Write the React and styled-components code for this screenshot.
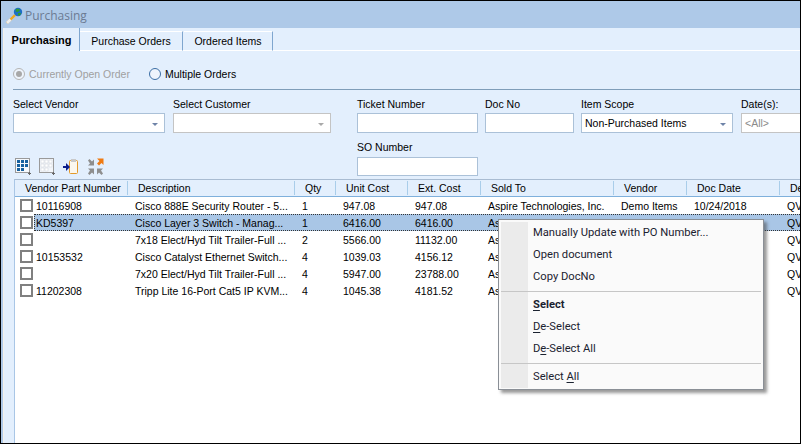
import styled, { createGlobalStyle } from "styled-components";

const COLS = [167, 41, 72, 73, 133, 73, 93, 40];

const headers = [
  "Description",
  "Qty",
  "Unit Cost",
  "Ext. Cost",
  "Sold To",
  "Vendor",
  "Doc Date",
  "Dept",
];

const rows = [
  ["10116908", "Cisco 888E Security Router - 5...", "1", "947.08", "947.08", "Aspire Technologies, Inc.", "Demo Items", "10/24/2018", "QVC"],
  ["KD5397", "Cisco Layer 3 Switch - Manag...", "1", "6416.00", "6416.00", "Aspire Technologies, Inc.", "", "", "QVC"],
  ["", "7x18 Elect/Hyd Tilt Trailer-Full ...", "2", "5566.00", "11132.00", "Aspire Technologies, Inc.", "", "", "QVC"],
  ["10153532", "Cisco Catalyst Ethernet Switch...", "4", "1039.03", "4156.12", "Aspire Technologies, Inc.", "", "", "QVC"],
  ["", "7x20 Elect/Hyd Tilt Trailer-Full ...", "4", "5947.00", "23788.00", "Aspire Technologies, Inc.", "", "", "QVC"],
  ["11202308", "Tripp Lite 16-Port Cat5 IP KVM...", "4", "1045.38", "4181.52", "Aspire Technologies, Inc.", "", "", "QVC"],
];

const Global = createGlobalStyle`
  html, body { margin: 0; padding: 0; background: #fff; }
  body { font-family: "Liberation Sans", Arial, sans-serif; font-size: 10.5px; color: #000; }
`;

const Window = styled.div`
  width: 801px;
  height: 444px;
  box-sizing: border-box;
  border: 1px solid #000;
  background: #aec9e8;
  display: flex;
  flex-direction: column;
  overflow: hidden;
  position: relative;
`;

const TitleBar = styled.div`
  height: 27px;
  flex: none;
  display: flex;
  align-items: center;
  gap: 1px;
  padding: 2px 0 0 5px;
  box-sizing: border-box;
  font-family: "Open Sans", sans-serif;
  font-size: 12px;
  color: #6c7b93;
`;

const Body = styled.div`
  flex: 1;
  min-height: 0;
  margin-left: 2px;
  border-left: 1px solid #f4f1ea;
  background: #e3effd;
  display: flex;
  flex-direction: column;
`;

const TabStrip = styled.div`
  height: 23px;
  flex: none;
  display: flex;
  align-items: flex-end;
  background: #e3effd;
  box-shadow: inset 0 -1px 0 #fff;
`;

const TabItem = styled.div`
  box-sizing: border-box;
  height: ${(p) => (p.$active ? 23 : 20)}px;
  width: ${(p) => p.$w}px;
  margin-right: ${(p) => p.$gap}px;
  display: flex;
  align-items: center;
  justify-content: center;
  background: #e3effd;
  border-top: ${(p) => (p.$active ? "none" : "1px solid #fff")};
  border-right: 1px solid #7fa6cf;
  border-bottom: ${(p) => (p.$active ? "none" : "1px solid #fff")};
  font-weight: ${(p) => (p.$active ? 700 : 400)};
  font-size: ${(p) => (p.$active ? 11 : 10.5)}px;
  color: #000;
`;

const RadioRow = styled.div`
  height: 39px;
  flex: none;
  box-sizing: border-box;
  margin-left: 9px;
  padding-top: 8px;
  display: flex;
  align-items: center;
  border-bottom: 1px solid #7f9db9;
`;

const RadioOption = styled.label`
  display: flex;
  align-items: center;
  gap: 4px;
  width: 136px;
  color: ${(p) => (p.$disabled ? "#a0a0a0" : "#000")};
`;

const RadioMark = styled.span`
  width: 12px;
  height: 12px;
  box-sizing: border-box;
  border-radius: 50%;
  border: 1px solid ${(p) => (p.$disabled ? "#b4b4b4" : "#3b6ea5")};
  background: #eef4fc;
  display: flex;
  align-items: center;
  justify-content: center;

  &::after {
    content: "";
    display: ${(p) => (p.$checked ? "block" : "none")};
    width: 6px;
    height: 6px;
    border-radius: 50%;
    background: #a8a8a8;
  }
`;

const Filters = styled.div`
  flex: none;
  padding: 8px 0 0 9px;
  display: flex;
`;

const Field = styled.div`
  width: ${(p) => p.$w}px;
  margin-right: ${(p) => p.$gap || 0}px;
  flex: none;
  display: flex;
  flex-direction: column;
`;

const FieldLabel = styled.div`
  height: 15px;
  line-height: 13px;
  white-space: nowrap;
`;

const Input = styled.div`
  height: 20px;
  box-sizing: border-box;
  background: #fff;
  border: 1px solid ${(p) => (p.$disabled ? "#c4c4c4" : "#abc1d8")};
  display: flex;
  align-items: center;
  justify-content: space-between;
  padding: 0 6px 0 3px;
  color: ${(p) => (p.$muted ? "#8a8a8a" : "#000")};
  white-space: nowrap;
  overflow: hidden;
`;

const Caret = styled.span`
  width: 0;
  height: 0;
  border-left: 3px solid transparent;
  border-right: 3px solid transparent;
  border-top: 3px solid ${(p) => (p.$disabled ? "#a9a9a9" : "#6e83a8")};
  margin-top: 2px;
`;

const SecondRow = styled.div`
  flex: none;
  height: 46px;
  box-sizing: border-box;
  padding: 8px 0 0 9px;
  display: flex;
  justify-content: space-between;
`;

const Toolbar = styled.div`
  display: flex;
  align-items: flex-start;
  gap: 7px;
  padding: 17px 0 0 2px;

  svg {
    display: block;
  }
`;

const SoField = styled(Field)`
  margin-right: 322px;

  ${FieldLabel} {
    height: 16px;
  }

  ${Input} {
    height: 19px;
  }
`;

const Grid = styled.div`
  flex: 1;
  min-height: 0;
  margin-left: 10px;
  background: #fff;
  border-left: 1px solid #a9c6e6;
  border-top: 1px solid #a9bcd2;
  overflow: hidden;
`;

const HeaderRow = styled.div`
  display: flex;
  height: 16px;
  background: #e3effd;
  border-bottom: 1px solid #7fb0dc;
`;

const HeaderCell = styled.div`
  width: ${(p) => p.$w}px;
  flex: none;
  box-sizing: border-box;
  padding-left: 10px;
  line-height: 14px;
  white-space: nowrap;
  overflow: hidden;
  border-right: 1px solid #a9cdea;
  margin: 1px 0;
`;

const Row = styled.div`
  display: flex;
  height: 17px;
`;

const CheckCell = styled.div`
  width: 19px;
  flex: none;
  padding-left: 5px;
  box-sizing: border-box;
  display: flex;
  align-items: center;
`;

const CheckBox = styled.span`
  width: 13px;
  height: 13px;
  box-sizing: border-box;
  border: 2px solid #808080;
  background: #fff;
`;

const RowBody = styled.div`
  flex: 1;
  display: flex;
  align-items: center;
  background: ${(p) => (p.$selected ? "#a9c6e6" : "transparent")};
  outline: ${(p) => (p.$selected ? "1px dotted #333" : "none")};
  outline-offset: -1px;
`;

const Cell = styled.div`
  width: ${(p) => p.$w}px;
  flex: none;
  box-sizing: border-box;
  padding-left: ${(p) => p.$pad}px;
  white-space: nowrap;
  overflow: hidden;
`;

const Menu = styled.div`
  position: absolute;
  left: 497px;
  top: 218px;
  width: 266px;
  height: 171px;
  box-sizing: border-box;
  background: #fafafa;
  border: 1px solid #8a8f96;
  box-shadow: 3px 3px 3px rgba(70, 70, 70, 0.55);
  padding: 2px;
  font-family: Roboto, sans-serif;
  font-size: 11.2px;
  color: #1b2230;
`;

const MenuItem = styled.div`
  height: 22px;
  display: flex;
  align-items: center;
  font-weight: ${(p) => (p.$bold ? 700 : 400)};
  white-space: pre;
  background: linear-gradient(to right, #ebebeb 27px, transparent 27px);
  padding: 0 0 2px 32px;
  box-sizing: border-box;

  u {
    text-underline-offset: 2px;
  }
`;

const MenuSeparator = styled.div`
  height: 6px;
  display: flex;
  align-items: center;
  background: linear-gradient(to right, #ebebeb 27px, transparent 27px);

  &::after {
    content: "";
    flex: 1;
    height: 1px;
    background: #c6c6c6;
  }
`;

function AppIcon() {
  return (
    <svg width="18" height="18" viewBox="0 0 18 18">
      <path d="M1 16 L9 8" stroke="#f2a81d" strokeWidth="2.4" />
      <path d="M1 16 L4.5 12.5" stroke="#eee" strokeWidth="2.6" />
      <circle cx="12" cy="5" r="4.2" fill="#1d6fc4" />
      <path d="M10 2 q3 -1 4 1 q-1 2 -3 2 q-2 0 -1 -3 Z M12 6 l3 0 l-1 2.5 l-2 0 Z" fill="#2f9b34" />
    </svg>
  );
}

function GridIcon({ active }) {
  const cells = [
    [2, 2], [6, 2], [10, 2],
    [2, 6], [6, 6], [10, 6],
    [2, 10], [6, 10],
  ];
  return (
    <svg width="17" height="17" viewBox="0 0 17 17">
      <rect x="0.5" y="0.5" width="14" height="14" fill={active ? "#f6f9fd" : "#f3f6fa"} stroke="#9a9a9a" />
      {cells.map(([x, y]) => (
        <rect
          key={`${x}-${y}`}
          x={x}
          y={y}
          width="3"
          height="3"
          fill={active ? "#17619f" : "#fff"}
          stroke={active ? "none" : "#cfd4da"}
          strokeWidth="0.5"
        />
      ))}
      <path d="M13 15.5 h3 M14.5 14 v3" stroke="#666" strokeWidth="1" />
    </svg>
  );
}

function ClipboardIcon() {
  return (
    <svg width="17" height="17" viewBox="0 0 17 17">
      <rect x="6.5" y="2.5" width="8" height="13" rx="1" fill="#fbf7ee" stroke="#e49a2a" />
      <rect x="8" y="1" width="5" height="3" fill="#c9c9c9" />
      <path d="M0 8 h3 v-3 l4 4 l-4 4 v-3 h-3 Z" fill="#0c1e8c" />
    </svg>
  );
}

function CollapseIcon() {
  return (
    <svg width="17" height="17" viewBox="0 0 17 17">
      <path d="M1 2.5 L2.5 1 L5 3.5 L7 1.5 V7.5 H1 L3 5.5 Z" fill="#8e8e8e" />
      <path d="M1 15.5 L2.5 17 L5 14.5 L7 16.5 V10.5 H1 L3 12.5 Z" fill="#8e8e8e" />
      <path d="M16 15.5 L14.5 17 L12 14.5 L10 16.5 V10.5 H16 L14 12.5 Z" fill="#8e8e8e" />
      <path d="M10 0.5 H16.5 V7 L14.5 5 L12 7.5 L10 5.5 L12.5 3 Z" fill="#ef7a12" />
    </svg>
  );
}

export default function App() {
  return (
    <>
      <Global />
      <Window>
        <TitleBar>
          <AppIcon />
          Purchasing
        </TitleBar>
        <Body>
          <TabStrip>
            <TabItem $active $w={76} $gap={0}>Purchasing</TabItem>
            <TabItem $w={103} $gap={1}>Purchase Orders</TabItem>
            <TabItem $w={89} $gap={0}>Ordered Items</TabItem>
          </TabStrip>
          <RadioRow>
            <RadioOption $disabled>
              <RadioMark $disabled $checked />
              Currently Open Order
            </RadioOption>
            <RadioOption>
              <RadioMark />
              Multiple Orders
            </RadioOption>
          </RadioRow>
          <Filters>
            <Field $w={152} $gap={8}>
              <FieldLabel>Select Vendor</FieldLabel>
              <Input><span />
                <Caret /></Input>
            </Field>
            <Field $w={158} $gap={26}>
              <FieldLabel>Select Customer</FieldLabel>
              <Input $disabled><span />
                <Caret $disabled /></Input>
            </Field>
            <Field $w={121} $gap={7}>
              <FieldLabel>Ticket Number</FieldLabel>
              <Input />
            </Field>
            <Field $w={89} $gap={7}>
              <FieldLabel>Doc No</FieldLabel>
              <Input />
            </Field>
            <Field $w={152} $gap={8}>
              <FieldLabel>Item Scope</FieldLabel>
              <Input>Non-Purchased Items
                <Caret /></Input>
            </Field>
            <Field $w={70}>
              <FieldLabel>Date(s):</FieldLabel>
              <Input $disabled $muted>&lt;All&gt;</Input>
            </Field>
          </Filters>
          <SecondRow>
            <Toolbar>
              <GridIcon active />
              <GridIcon />
              <ClipboardIcon />
              <CollapseIcon />
            </Toolbar>
            <SoField $w={121}>
              <FieldLabel>SO Number</FieldLabel>
              <Input />
            </SoField>
          </SecondRow>
          <Grid>
            <HeaderRow>
              <HeaderCell $w={113}>Vendor Part Number</HeaderCell>
              {headers.map((h, i) => (
                <HeaderCell key={h} $w={COLS[i]}>{h}</HeaderCell>
              ))}
            </HeaderRow>
            {rows.map((r, idx) => (
              <Row key={idx}>
                <CheckCell><CheckBox /></CheckCell>
                <RowBody $selected={idx === 1}>
                  <Cell $w={94} $pad={2}>{r[0]}</Cell>
                  {COLS.map((w, i) => (
                    <Cell key={i} $w={w} $pad={7}>{r[i + 1]}</Cell>
                  ))}
                </RowBody>
              </Row>
            ))}
          </Grid>
        </Body>
        <Menu>
          <MenuItem>Manually Update with PO Number...</MenuItem>
          <MenuItem>Open document</MenuItem>
          <MenuItem>Copy DocNo</MenuItem>
          <MenuSeparator />
          <MenuItem $bold><u>S</u>elect</MenuItem>
          <MenuItem><u>D</u>e-Select</MenuItem>
          <MenuItem>D<u>e</u>-Select All</MenuItem>
          <MenuSeparator />
          <MenuItem>Select <u>A</u>ll</MenuItem>
        </Menu>
      </Window>
    </>
  );
}
